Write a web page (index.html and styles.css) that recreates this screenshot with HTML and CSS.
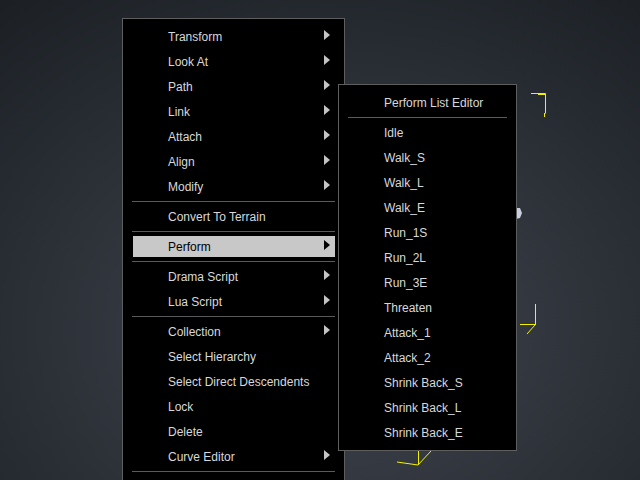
FILE: index.html
```html
<!DOCTYPE html>
<html>
<head>
<meta charset="utf-8">
<link rel="stylesheet" href="styles.css">
<title>Scene</title>
</head>
<body>
<div class="viewport">
  <!-- scene gizmos drawn in the 3D view -->
  <svg class="gizmos" width="640" height="480" viewBox="0 0 640 480">
    <g stroke="#f2f200" fill="none" stroke-width="1">
      <path d="M531 93.5 H545.5 V113.5"/>
      <path d="M538 94.5 H545"/>
      <path d="M544.5 113 V117"/>
      <path d="M535.5 304 V325"/>
      <path d="M520 324.5 H535"/>
      <path d="M535 325 L527 334"/>
      <path d="M418.5 451 V465"/>
      <path d="M397 462 L418 465"/>
      <path d="M418 465 L431 451"/>
    </g>
    <path d="M516 208 L520 208 L522 213 L520 218 L516 219 Z" fill="#c8cde0"/>
  </svg>

  <ul class="menu menu-main">
    <li class="item has-sub">Transform</li>
    <li class="item has-sub">Look At</li>
    <li class="item has-sub">Path</li>
    <li class="item has-sub">Link</li>
    <li class="item has-sub">Attach</li>
    <li class="item has-sub">Align</li>
    <li class="item has-sub">Modify</li>
    <li class="sep"></li>
    <li class="item">Convert To Terrain</li>
    <li class="sep"></li>
    <li class="item has-sub active">Perform</li>
    <li class="sep"></li>
    <li class="item has-sub">Drama Script</li>
    <li class="item has-sub">Lua Script</li>
    <li class="sep"></li>
    <li class="item has-sub">Collection</li>
    <li class="item">Select Hierarchy</li>
    <li class="item">Select Direct Descendents</li>
    <li class="item">Lock</li>
    <li class="item">Delete</li>
    <li class="item has-sub">Curve Editor</li>
    <li class="sep"></li>
  </ul>

  <ul class="menu menu-sub">
    <li class="item">Perform List Editor</li>
    <li class="sep"></li>
    <li class="item">Idle</li>
    <li class="item">Walk_S</li>
    <li class="item">Walk_L</li>
    <li class="item">Walk_E</li>
    <li class="item">Run_1S</li>
    <li class="item">Run_2L</li>
    <li class="item">Run_3E</li>
    <li class="item">Threaten</li>
    <li class="item">Attack_1</li>
    <li class="item">Attack_2</li>
    <li class="item">Shrink Back_S</li>
    <li class="item">Shrink Back_L</li>
    <li class="item">Shrink Back_E</li>
  </ul>
</div>
</body>
</html>
```
FILE: styles.css
```css
html, body {
  margin: 0;
  padding: 0;
  overflow: hidden;
}

.viewport {
  position: relative;
  width: 640px;
  height: 480px;
  overflow: hidden;
  background:
    radial-gradient(ellipse 520px 420px at 330px 330px, #3c4149 0%, #343941 35%, #262b31 70%, #1c2025 100%);
  font-family: "Liberation Sans", Arial, sans-serif;
  font-size: 12px;
}

.gizmos {
  position: absolute;
  left: 0;
  top: 0;
}

.menu {
  position: absolute;
  margin: 0;
  padding: 5px 0;
  list-style: none;
  background: #000;
  border: 1px solid #5e5e5e;
  color: #d6d9dd;
}

.menu-main {
  left: 122px;
  top: 18px;
  width: 221px;
  padding-bottom: 40px;
}

.menu-sub {
  left: 338px;
  top: 84px;
  width: 177px;
}

.item {
  position: relative;
  height: 24px;
  padding-top: 1px;
  line-height: 25px;
  padding-left: 45px;
  white-space: nowrap;
}

.has-sub::after {
  content: "";
  position: absolute;
  right: 14px;
  top: 6px;
  width: 0;
  height: 0;
  border-left: 6px solid #c4c4c4;
  border-top: 5px solid transparent;
  border-bottom: 5px solid transparent;
}

/* highlighted row: grey bar inset inside the row */
.active {
  color: #000;
  isolation: isolate;
}

.active::before {
  content: "";
  position: absolute;
  left: 10px;
  right: 9px;
  top: 2px;
  bottom: 2px;
  background: #c8c8c8;
  z-index: -1;
}

.active::after {
  border-left-color: #000;
}

.sep {
  height: 5px;
  position: relative;
}

.sep::before {
  content: "";
  position: absolute;
  left: 9px;
  right: 9px;
  top: 2px;
  height: 1px;
  background: #5a5a5a;
}
```
